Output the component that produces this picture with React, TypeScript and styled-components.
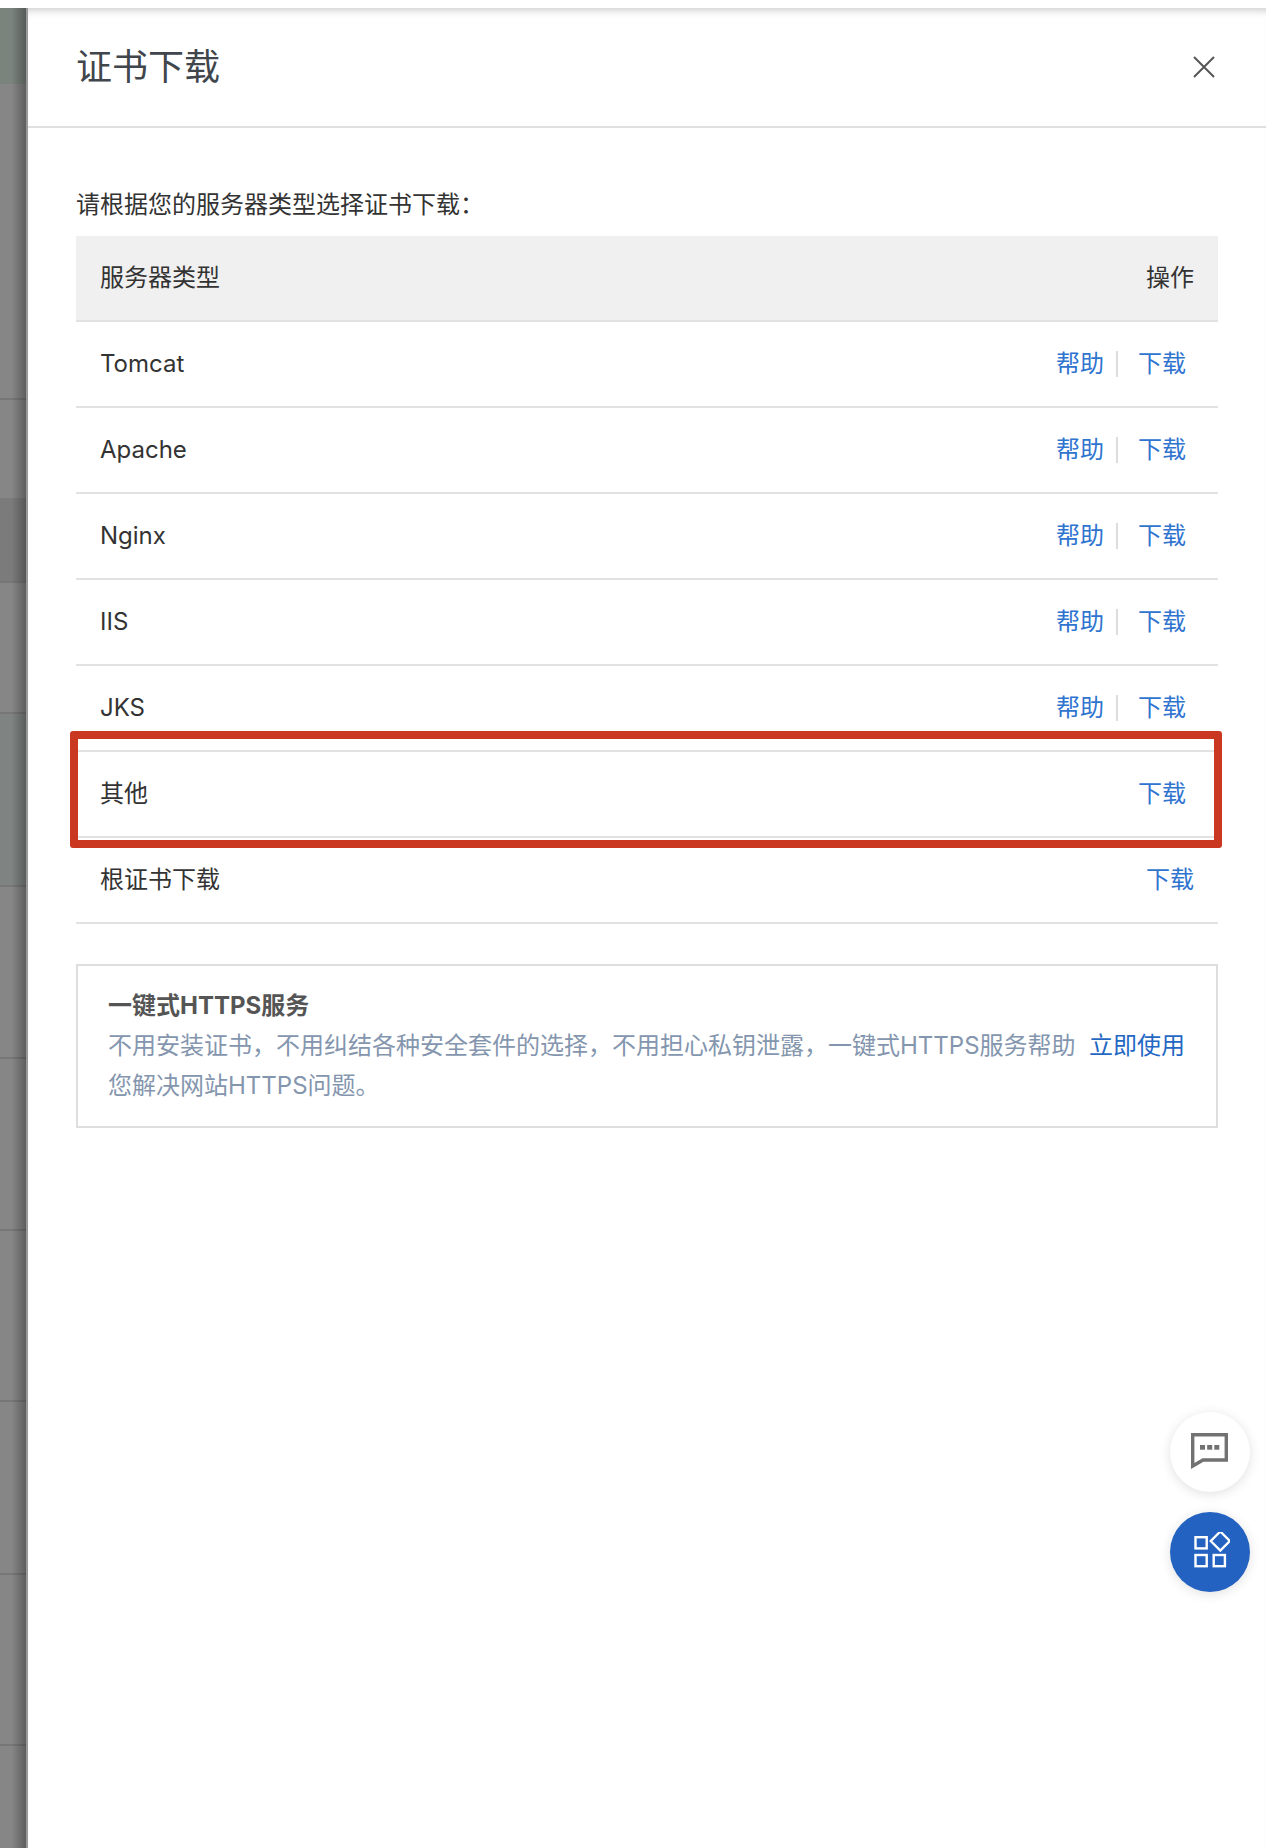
import React from 'react'
import styled, { createGlobalStyle } from 'styled-components'

const GlobalStyle = createGlobalStyle`
  html, body {
    margin: 0;
    padding: 0;
    background: #fff;
  }
  body {
    font-family: Inter, "Noto Sans CJK SC", sans-serif;
    color: #333;
  }
`

const stripBands = [
  { h: 76, color: '#7b837d', line: false },
  { h: 316, color: '#868686', line: true },
  { h: 98, color: '#868686', line: false },
  { h: 85, color: '#7b7b7b', line: true },
  { h: 131, color: '#868686', line: true },
  { h: 173, color: '#7f8482', line: true },
  { h: 172, color: '#868686', line: true },
  { h: 172, color: '#868686', line: true },
  { h: 171, color: '#868686', line: true },
  { h: 173, color: '#868686', line: true },
  { h: 171, color: '#868686', line: true },
  { h: 102, color: '#868686', line: false }
]

const servers = [
  { name: 'Tomcat', help: true },
  { name: 'Apache', help: true },
  { name: 'Nginx', help: true },
  { name: 'IIS', help: true },
  { name: 'JKS', help: true },
  { name: '其他', help: false, marked: true },
  { name: '根证书下载', help: false, wide: true }
]

const App = () => {
  return (
    <Page>
      <GlobalStyle />
      <Strip>
        {stripBands.map((b, i) => (
          <StripBand key={i} $h={b.h} $color={b.color} $line={b.line} />
        ))}
      </Strip>
      <Drawer>
        <DrawerHeader>
          <DrawerTitle>证书下载</DrawerTitle>
          <CloseIcon viewBox="0 0 22 22">
            <path d="M1 1 L21 21 M21 1 L1 21" stroke="#555" strokeWidth="2" fill="none" />
          </CloseIcon>
        </DrawerHeader>
        <DrawerBody>
          <Hint>请根据您的服务器类型选择证书下载：</Hint>
          <HeadRow>
            <span>服务器类型</span>
            <span>操作</span>
          </HeadRow>
          {servers.map(s => (
            <Row key={s.name}>
              <span>{s.name}</span>
              <Actions $wide={s.wide}>
                {s.help && (
                  <>
                    <ActionLink>帮助</ActionLink>
                    <Divider />
                  </>
                )}
                <ActionLink>下载</ActionLink>
              </Actions>
              {s.marked && <Highlight />}
            </Row>
          ))}
          <Promo>
            <PromoTitle>一键式HTTPS服务</PromoTitle>
            <PromoText>
              <PromoLink>立即使用</PromoLink>
              不用安装证书，不用纠结各种安全套件的选择，不用担心私钥泄露，一键式HTTPS服务帮助您解决网站HTTPS问题。
            </PromoText>
          </Promo>
        </DrawerBody>
        <FloatButton $top={1412} $blue={false}>
          <svg width="40" height="38" viewBox="0 0 40 38">
            <path d="M2.7 1.7 H36.3 V27 H13 L2.7 33 Z" fill="none" stroke="#727272" strokeWidth="3.4" />
            <rect x="10" y="12" width="5" height="4.7" fill="#727272" />
            <rect x="17.2" y="12" width="5" height="4.7" fill="#727272" />
            <rect x="24.3" y="12" width="5" height="4.7" fill="#727272" />
          </svg>
        </FloatButton>
        <FloatButton $top={1512} $blue={true}>
          <svg width="40" height="40" viewBox="0 0 40 40" fill="none" stroke="#fff" strokeWidth="2.4">
            <rect x="5.5" y="5.2" width="11.2" height="11.2" />
            <rect x="5.5" y="23" width="11.2" height="11.2" />
            <rect x="23.7" y="23" width="11.2" height="11.2" />
            <path d="M30.3 -0.5 L39.8 9 L30.3 18.5 L20.8 9 Z" />
          </svg>
        </FloatButton>
      </Drawer>
    </Page>
  )
}

export default App

const Page = styled.div`
  display: flex;
  box-sizing: border-box;
  width: 1266px;
  height: 1848px;
  padding-top: 8px;
  overflow: hidden;
  position: relative;
`

const Strip = styled.div`
  position: relative;
  box-sizing: border-box;
  flex: 0 0 28px;
  display: flex;
  flex-direction: column;
  border-right: 2px solid #999;

  &::after {
    content: '';
    position: absolute;
    inset: 0;
    background: linear-gradient(to right, rgba(0, 0, 0, 0) 45%, rgba(0, 0, 0, 0.3) 100%);
  }
`

const StripBand = styled.div<{ $h: number; $color: string; $line: boolean }>`
  box-sizing: border-box;
  height: ${({ $h }) => $h}px;
  flex: none;
  background: ${({ $color }) => $color};
  border-bottom: ${({ $line }) => ($line ? '2px solid #777' : 'none')};
`

const Drawer = styled.div`
  flex: 1;
  min-width: 0;
  background: #fff;
  box-shadow: inset 0 9px 8px -7px rgba(0, 0, 0, 0.22);
`

const DrawerHeader = styled.div`
  box-sizing: border-box;
  height: 120px;
  display: flex;
  align-items: center;
  justify-content: space-between;
  padding: 0 51px 0 48px;
  border-bottom: 2px solid #e0e0e0;
`

const DrawerTitle = styled.h1`
  margin: 0;
  font-size: 36px;
  line-height: 48px;
  font-weight: 400;
  color: #40464b;
`

const CloseIcon = styled.svg`
  width: 22px;
  height: 22px;
`

const DrawerBody = styled.div`
  padding: 0 48px;
`

const Hint = styled.div`
  height: 108px;
  box-sizing: border-box;
  padding-top: 59px;
  font-size: 24px;
  line-height: 36px;
  color: #333;
`

const HeadRow = styled.div`
  box-sizing: border-box;
  height: 86px;
  display: flex;
  align-items: center;
  justify-content: space-between;
  padding: 0 24px;
  font-size: 24px;
  line-height: 36px;
  background: #f0f0f0;
  border-bottom: 2px solid #e2e2e2;
`

const Row = styled.div`
  position: relative;
  box-sizing: border-box;
  height: 86px;
  display: flex;
  align-items: center;
  justify-content: space-between;
  padding: 0 24px;
  font-size: 24px;
  line-height: 36px;
  border-bottom: 2px solid #e2e2e2;
`

const Actions = styled.div<{ $wide?: boolean }>`
  display: flex;
  align-items: center;
  margin-right: ${({ $wide }) => ($wide ? '0' : '8px')};
`

const ActionLink = styled.a`
  color: #2f74cf;
  cursor: pointer;
`

const Divider = styled.i`
  display: block;
  width: 2px;
  height: 26px;
  margin: 0 20px 0 12px;
  background: #ddd;
`

const Highlight = styled.div`
  position: absolute;
  left: -6px;
  right: -4px;
  top: -21px;
  bottom: -12px;
  border: 8px solid #cb3822;
  border-radius: 3px;
`

const Promo = styled.div`
  box-sizing: border-box;
  height: 164px;
  margin-top: 40px;
  padding: 22px 31px 0 30px;
  border: 2px solid #dedede;
`

const PromoTitle = styled.div`
  font-size: 24px;
  line-height: 36px;
  font-weight: 700;
  color: #555;
  margin-bottom: 2px;
`

const PromoText = styled.div`
  font-size: 24px;
  line-height: 40px;
  color: #8496ae;
`

const PromoLink = styled.a`
  float: right;
  margin-left: 10px;
  color: #2468c4;
  cursor: pointer;
`

const FloatButton = styled.div<{ $top: number; $blue: boolean }>`
  position: absolute;
  left: 1170px;
  top: ${({ $top }) => $top}px;
  width: 80px;
  height: 80px;
  border-radius: 50%;
  display: flex;
  align-items: center;
  justify-content: center;
  background: ${({ $blue }) => ($blue ? '#2362c0' : '#fff')};
  box-shadow: 0 2px 12px rgba(0, 0, 0, 0.12);
`
